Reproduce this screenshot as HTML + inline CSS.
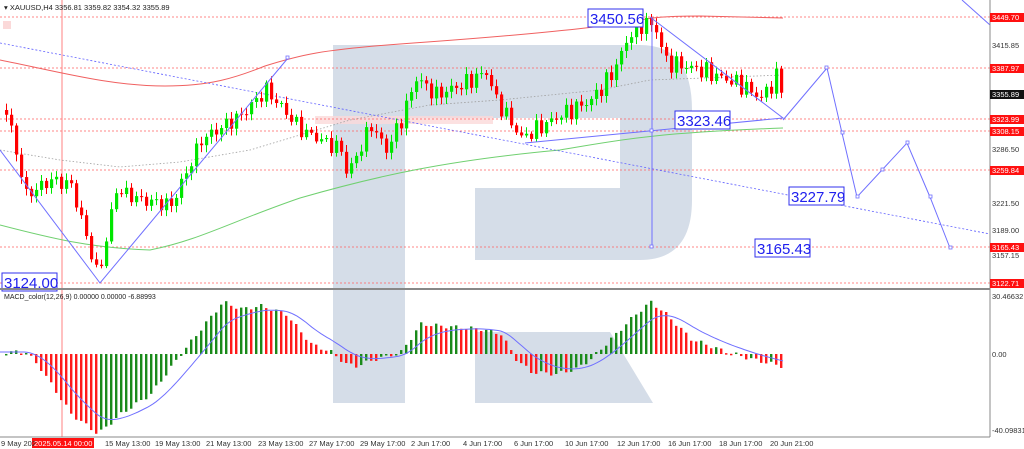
<!DOCTYPE html>
<html><head><meta charset="utf-8"><style>
html,body{margin:0;padding:0;background:#fff;}
body{width:1024px;height:449px;overflow:hidden;position:relative;font-family:"Liberation Sans",sans-serif;}
svg{position:absolute;left:0;top:0;}
.ax{font-size:7.5px;fill:#333;}
.rl{font-size:7.5px;fill:#fff;}
.bl{font-size:15px;fill:#2020ee;}
</style></head><body>
<svg id="s" width="1024" height="449" viewBox="0 0 1024 449">
<path d="M333 45 H640 Q692 45 692 110 V200 Q692 260 640 260 H475 V188 H620 V118 H405 V403 H333 Z" fill="#d5dde8"/>
<path d="M475 332 H610 L653 403 H475 Z" fill="#d5dde8"/>
<rect x="3" y="21" width="8" height="8" fill="#fbd9d9"/>
<rect x="315" y="116" width="178" height="8" fill="#fbd9d9" opacity="0.8"/>
<g id="grid" stroke="#ff6060" stroke-width="0.8" stroke-dasharray="2,2">
<line x1="0" y1="17" x2="990" y2="17"/><line x1="0" y1="68" x2="990" y2="68"/>
<line x1="0" y1="119" x2="990" y2="119"/><line x1="0" y1="131" x2="990" y2="131"/>
<line x1="0" y1="170" x2="990" y2="170"/><line x1="0" y1="247" x2="990" y2="247"/>
<line x1="0" y1="283" x2="990" y2="283"/>
</g>
<line x1="62" y1="0" x2="62" y2="437" stroke="#ff8080" stroke-width="1"/>
<path fill="none" stroke="#f06060" stroke-width="1" d="M0 60 C60 72 110 86 165 86 C210 86 235 78 265 66 C300 55 320 50 400 44 C500 37 580 30 630 22 C650 18 660 16 700 16 L783 18"/>
<path fill="none" stroke="#70d070" stroke-width="1" d="M0 225 C50 238 90 248 150 250 C200 240 230 222 300 198 C380 175 450 160 560 150 C620 140 650 133 783 128"/>
<polyline fill="none" stroke="#a0a0a0" stroke-width="0.8" stroke-dasharray="1.5,2" points="0,150 60,160 120,167 180,162 250,150 350,120 430,105 500,100 600,90 650,80 783,75"/>
<line x1="0" y1="43" x2="990" y2="234" stroke="#6060ff" stroke-width="0.8" stroke-dasharray="2,2"/>
<g id="candles"></g>
<g fill="none" stroke="#7070ff" stroke-width="1">
<polyline points="0,150 100,283 288,58"/>
<line x1="652" y1="17" x2="652" y2="247"/>
<polyline points="650,17 783,118 525,143"/>
<polyline points="783,120 827,68 842,133 857,197 882,170 907,143 930,197 950,248"/>
<line x1="962" y1="0" x2="990" y2="25"/>
</g>
<g fill="#fff" stroke="#7070ff" stroke-width="0.8">
<rect x="286" y="56" width="3" height="3"/><rect x="825" y="66" width="3" height="3"/><rect x="841" y="131" width="3" height="3"/><rect x="856" y="195" width="3" height="3"/><rect x="881" y="168" width="3" height="3"/><rect x="906" y="141" width="3" height="3"/><rect x="929" y="195" width="3" height="3"/><rect x="949" y="246" width="3" height="3"/><rect x="650" y="245" width="3" height="3"/><rect x="650" y="129" width="3" height="3"/>
</g>
<g fill="#fff" stroke="#3030ee" stroke-width="1">
<rect x="588" y="9" width="55" height="18"/><rect x="675" y="111" width="55" height="18"/><rect x="789" y="187" width="55" height="18"/><rect x="755" y="239" width="55" height="18"/><rect x="2" y="273" width="55" height="18"/>
</g>
<text class="bl" x="590" y="24">3450.56</text><text class="bl" x="677" y="126">3323.46</text><text class="bl" x="791" y="202">3227.79</text><text class="bl" x="757" y="254">3165.43</text><text class="bl" x="4" y="288">3124.00</text>
<text x="4" y="10" style="font-size:7.5px;fill:#222">▾ XAUUSD,H4  3356.81 3359.82 3354.32 3355.89</text>
<g id="macd"></g>
<text x="4" y="299" style="font-size:7px;fill:#222">MACD_color(12,26,9) 0.00000 0.00000 -6.88993</text>
<line x1="990" y1="0" x2="990" y2="437" stroke="#888"/>
<line x1="0" y1="289" x2="990" y2="289" stroke="#888" stroke-width="2"/>
<line x1="0" y1="437" x2="990" y2="437" stroke="#888"/>
<g class="ax">
<text x="992" y="48">3415.85</text><text x="992" y="152">3286.50</text><text x="992" y="206">3221.50</text><text x="992" y="233">3189.00</text><text x="992" y="258">3157.15</text><text x="992" y="299">30.46632</text><text x="992" y="357">0.00</text><text x="992" y="433">-40.09831</text>
</g>
<g fill="#ff1010">
<rect x="990" y="13" width="34" height="9"/><rect x="990" y="64" width="34" height="9"/><rect x="990" y="115" width="34" height="9"/><rect x="990" y="127" width="34" height="9"/><rect x="990" y="166" width="34" height="9"/><rect x="990" y="243" width="34" height="9"/><rect x="990" y="279" width="34" height="9"/>
</g>
<rect x="990" y="90" width="34" height="9" fill="#111"/>
<g class="rl">
<text x="992" y="20">3449.70</text><text x="992" y="71">3387.97</text><text x="992" y="97">3355.89</text><text x="992" y="122">3323.99</text><text x="992" y="134">3308.15</text><text x="992" y="173">3259.84</text><text x="992" y="250">3165.43</text><text x="992" y="286">3122.71</text>
</g>
<rect x="32" y="438" width="62" height="10" fill="#ff1010"/>
<g class="ax">
<text x="1" y="446">9 May 202</text><text x="105" y="446">15 May 13:00</text><text x="155" y="446">19 May 13:00</text><text x="206" y="446">21 May 13:00</text><text x="258" y="446">23 May 13:00</text><text x="309" y="446">27 May 17:00</text><text x="360" y="446">29 May 17:00</text><text x="411" y="446">2 Jun 17:00</text><text x="463" y="446">4 Jun 17:00</text><text x="514" y="446">6 Jun 17:00</text><text x="565" y="446">10 Jun 17:00</text><text x="617" y="446">12 Jun 17:00</text><text x="668" y="446">16 Jun 17:00</text><text x="719" y="446">18 Jun 17:00</text><text x="770" y="446">20 Jun 21:00</text>
</g>
<text x="34" y="446" class="rl">2025.05.14 00:00</text>
</svg>
<script>
(function(){
var NS="http://www.w3.org/2000/svg";
function el(p,t,a){var e=document.createElementNS(NS,t);for(var k in a)e.setAttribute(k,a[k]);p.appendChild(e);return e;}
function interp(pts,x){for(var i=0;i<pts.length-1;i++){if(x<=pts[i+1][0]){var a=pts[i],b=pts[i+1];return a[1]+(b[1]-a[1])*(x-a[0])/(b[0]-a[0]);}}return pts[pts.length-1][1];}
var P=[[5,110],[25,195],[50,180],[70,185],[97,278],[115,190],[140,200],[170,205],[200,140],[240,115],[265,90],[300,130],[340,150],[346,175],[370,125],[385,150],[400,120],[415,78],[435,95],[460,85],[485,72],[495,100],[520,138],[560,115],[590,100],[610,75],[630,32],[645,22],[655,30],[665,62],[700,70],[740,85],[760,98],[775,78],[783,93]];
var g=document.getElementById("candles");var prev=110;
for(var x=5;x<=783;x+=5){var c=interp(P,x)+Math.sin(x*1.7)*6+Math.sin(x*0.63)*4;var o=prev;var hi=Math.min(o,c)-2-Math.abs(Math.sin(x*2.3))*5;var lo=Math.max(o,c)+2+Math.abs(Math.cos(x*1.9))*5;var col=c<o?"#00e600":"#ff0000";
el(g,"line",{x1:x+1.5,y1:hi,x2:x+1.5,y2:lo,stroke:col,"stroke-width":1});
el(g,"rect",{x:x,y:Math.min(o,c),width:3.2,height:Math.max(1,Math.abs(c-o)),fill:col});prev=c;}
var M=[[5,2],[25,2],[40,-15],[70,-60],[97,-80],[120,-60],[150,-40],[180,0],[200,25],[222,52],[240,45],[260,48],[285,40],[310,10],[330,2],[345,-10],[355,-12],[375,-5],[400,2],[420,30],[440,28],[480,25],[500,20],[515,-5],[530,-18],[555,-20],[575,-15],[590,-5],[610,15],[635,40],[650,52],[665,40],[690,15],[720,4],[750,-5],[780,-12]];
var mg=document.getElementById("macd");var z=354,k=1.0,pv=0;
for(var x=5;x<=783;x+=5){var v=interp(M,x)+Math.sin(x*0.9)*2;var col=v>pv?"#1a8a1a":"#ff1a1a";var y=z-v*k;el(mg,"rect",{x:x,y:Math.min(y,z),width:2.4,height:Math.max(1.5,Math.abs(y-z)),fill:col});pv=v;}
var pts=[],s=interp(M,5);for(var x=0;x<=783;x+=3){s=s+(interp(M,x)-s)*0.12;pts.push(x+","+(z-s*k).toFixed(1));}
el(mg,"polyline",{points:pts.join(" "),fill:"none",stroke:"#7070ff","stroke-width":1});
})();
</script>
</body></html>
